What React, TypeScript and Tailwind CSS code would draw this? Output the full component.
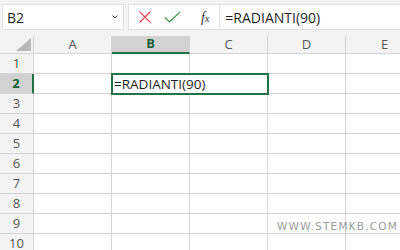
import React from 'react';

const cols = ['A', 'B', 'C', 'D', 'E'];
const rows = [1, 2, 3, 4, 5, 6, 7, 8, 9, 10];

function NameBox() {
  return (
    <div className="flex items-center justify-between w-[122px] h-[26px] bg-white border border-[#e1e1e1] pl-[4px] pr-[4px]">
      <span className="text-[14px] text-[#262626]">B2</span>
      <svg width="8" height="6" viewBox="0 0 8 6">
        <path d="M1.5 1.5 L4 4 L6.5 1.5" fill="none" stroke="#444" strokeWidth="1" />
      </svg>
    </div>
  );
}

function FormulaBar() {
  return (
    <div className="flex items-center flex-1 h-[26px] bg-white border border-[#e1e1e1] border-r-0">
      <div className="flex items-center gap-[12px] pl-[9px] pr-[10px]">
        <svg width="14" height="14" viewBox="0 0 14 14">
          <path d="M1.5 1.5 L12.5 12.5 M12.5 1.5 L1.5 12.5" stroke="#e8434f" strokeWidth="1.1" fill="none" />
        </svg>
        <svg width="17" height="13" viewBox="0 0 17 13">
          <path d="M1 6.5 L5.5 11 L16 1" stroke="#3c9b4c" strokeWidth="1.2" fill="none" />
        </svg>
        <span className="text-[14px] italic text-[#333] ml-[8px]" style={{ fontFamily: '"Liberation Serif", serif' }}>
          f<span className="text-[10px]">x</span>
        </span>
      </div>
      <div className="w-px h-[26px] bg-[#e1e1e1]" />
      <span className="pl-[5px] text-[14px] text-[#1f1f1f]">=RADIANTI(90)</span>
    </div>
  );
}

export default function App() {
  return (
    <div className="w-[400px] h-[250px] overflow-hidden bg-white" style={{ fontFamily: '"Open Sans", "Noto Sans", sans-serif' }}>
      <div className="flex items-start gap-[4px] h-[36px] bg-[#f3f3f3] pl-[2px] pt-[4px]">
        <NameBox />
        <FormulaBar />
      </div>
      <div className="relative">
        <div className="grid grid-cols-[34px_78px_78px_78px_78px_78px] grid-rows-[18px_repeat(10,20px)] w-[424px]">
          <div className="relative bg-[#f3f3f3] border-r border-b border-[#d4d4d4]">
            <svg className="absolute right-[2px] bottom-[2px]" width="15" height="13" viewBox="0 0 15 13">
              <path d="M15 0 L15 13 L0 13 Z" fill="#b9b9b9" />
            </svg>
          </div>
          {cols.map((c) =>
            c === 'B' ? (
              <div key={c} className="flex items-center justify-center bg-[#d2d2d2] border-r border-[#d4d4d4] border-b-2 border-b-[#217346] text-[13px] font-bold text-[#1e5e37]">
                {c}
              </div>
            ) : (
              <div key={c} className="flex items-center justify-center bg-[#f3f3f3] border-r border-b border-[#d4d4d4] text-[13px] text-[#555]">
                {c}
              </div>
            )
          )}
          {rows.map((r) => (
            <React.Fragment key={r}>
              {r === 2 ? (
                <div className="flex items-center justify-center bg-[#d2d2d2] border-b border-[#d4d4d4] border-r-2 border-r-[#217346] text-[13px] font-bold text-[#1e5e37]">
                  {r}
                </div>
              ) : (
                <div className="flex items-center justify-center bg-[#f3f3f3] border-r border-b border-[#d4d4d4] text-[13px] text-[#555]">
                  {r}
                </div>
              )}
              {cols.map((c) => (
                <div key={c} className="border-r border-b border-[#d4d4d4]" />
              ))}
            </React.Fragment>
          ))}
        </div>
        {/* cell in edit mode, widened to fit its text */}
        <div className="absolute left-[111px] top-[37px] w-[158px] h-[22px] border-2 border-[#217346] flex items-center pl-[1px] text-[13.5px] text-[#1f1f1f] whitespace-nowrap bg-white">
          =RADIANTI(90)
        </div>
        <div className="absolute left-[277px] top-[183px] text-[10.5px] tracking-[1.2px] text-[#9a9a9a]" style={{ fontFamily: '"DejaVu Sans", sans-serif' }}>
          WWW.STEMKB.COM
        </div>
      </div>
    </div>
  );
}
